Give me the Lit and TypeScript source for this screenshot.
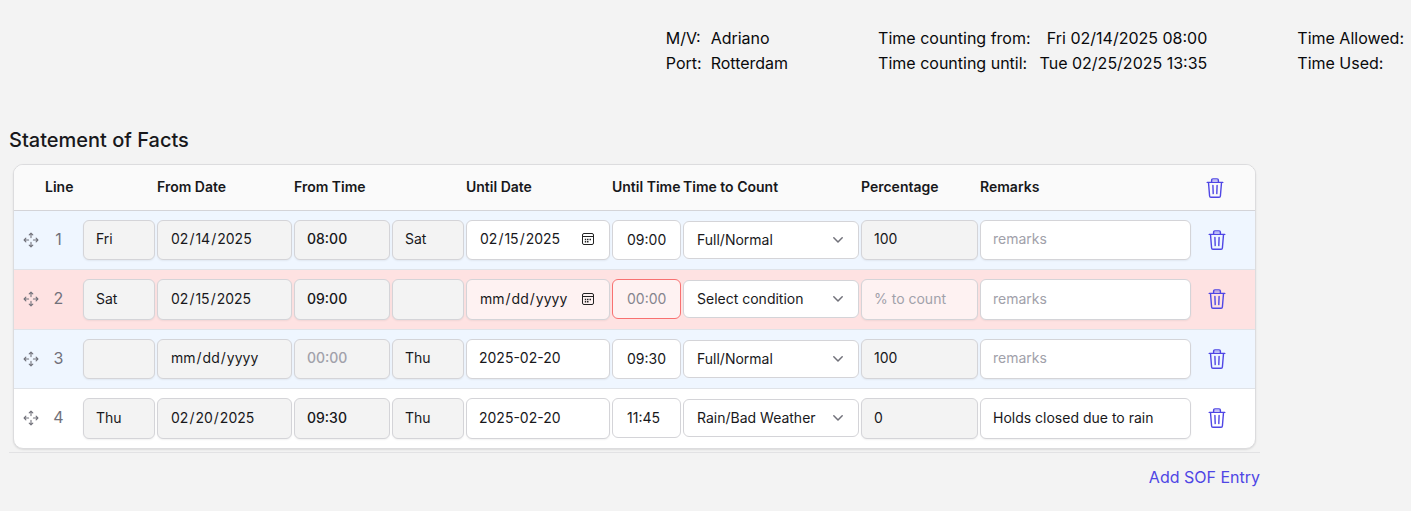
import { LitElement, html, css, svg } from "lit";
import { customElement, state } from "lit/decorators.js";
import { classMap } from "lit/directives/class-map.js";

interface SofEntry {
  fromDay: string;
  fromDate: string;
  fromTime: string;
  untilDay: string;
  untilDate: string;
  untilDateIsText?: boolean;
  untilTime: string;
  condition: string;
  percentage: string;
  remarks: string;
  tone: "info" | "invalid" | "plain";
}

const CONDITIONS = ["Select condition", "Full/Normal", "Rain/Bad Weather"];

const trashIcon = html`<svg class="trash" viewBox="0 0 18 20" width="18" height="20" aria-hidden="true">
  ${svg`<g fill="none" stroke="currentColor" stroke-width="1.4" stroke-linecap="round" stroke-linejoin="round">
    <path d="M1.2 4.4H16.8" />
    <path d="M5.6 4.2V2.2Q5.6 .9 6.9 .9H11.1Q12.4 .9 12.4 2.2V4.2" />
    <path d="M5.6 2.7H12.4" stroke-width=".7" opacity=".6" />
    <path d="M2.5 4.6L3.6 18Q3.7 19.2 4.9 19.2H13.1Q14.3 19.2 14.4 18L15.5 4.6" />
    <path d="M6.9 7.4L7.2 15.6M11.1 7.4L10.8 15.6" />
  </g>`}
</svg>`;

const moveIcon = html`<svg class="move" viewBox="0 0 16 16" width="16" height="16" aria-hidden="true">
  ${svg`<g fill="none" stroke="currentColor" stroke-width="1.1" stroke-linecap="round" stroke-linejoin="round">
    <path d="M8 5.6V1.2M6.2 2.9L8 1.1L9.8 2.9" />
    <path d="M8 10.4V14.8M6.2 13.1L8 14.9L9.8 13.1" />
    <path d="M5.6 8H1.2M2.9 6.2L1.1 8L2.9 9.8" />
    <path d="M10.4 8H14.8M13.1 6.2L14.9 8L13.1 9.8" />
  </g>`}
</svg>`;

@customElement("app-root")
export class AppRoot extends LitElement {
  static styles = css`
    :host {
      display: block;
      box-sizing: border-box;
      min-height: 100vh;
      background: #f3f3f3;
      color: #18181b;
      font-family: Inter, "Liberation Sans", sans-serif;
      font-size: 14px;
      line-height: 20px;
    }
    *, *::before, *::after { box-sizing: border-box; }

    .summary {
      display: flex;
      justify-content: flex-end;
      gap: 90px;
      padding: 26px 7px 0;
      font-size: 16px;
      line-height: 25px;
      color: #09090b;
      white-space: nowrap;
    }
    .pairs {
      display: grid;
      grid-template-columns: auto auto;
      column-gap: 9px;
      align-content: start;
      margin: 0;
    }
    .pairs dd { margin: 0; }
    .period dd { text-align: right; }
    .totals { display: block; }

    .statement {
      padding: 50px 151px 0 9px;
    }
    h1 {
      margin: 0;
      font-size: 20px;
      line-height: 28px;
      font-weight: 500;
    }
    .sheet {
      padding: 10px 4px 3px;
      border-bottom: 1px solid #e2e2e4;
    }
    .card {
      overflow: hidden;
      border: 1px solid #dcdcde;
      border-radius: 10px;
      background: #fff;
      box-shadow: 0 1px 2px rgba(0, 0, 0, 0.1);
    }
    table {
      width: 100%;
      table-layout: fixed;
      border-collapse: separate;
      border-spacing: 0;
    }
    .c-move { width: 30px; }
    .c-line { width: 38px; }
    .c-day { width: 74px; }
    .c-date { width: 137px; }
    .c-time { width: 98px; }
    .c-until { width: 146px; }
    .c-clock { width: 71px; }
    .c-count { width: 178px; }
    .c-pct { width: 119px; }
    .c-action { width: 63px; }

    th {
      height: 46px;
      padding: 0 1px 2px;
      border-bottom: 1px solid #d4d4d8;
      background: #fafafa;
      text-align: left;
      font-weight: 600;
      white-space: nowrap;
    }
    td {
      padding: 9px 1px;
      border-bottom: 1px solid #e0e3e8;
      vertical-align: top;
    }
    tbody tr:last-child td { border-bottom: 0; }
    .info td { background: #eff6ff; }
    .invalid td { background: #fee2e2; }

    th.line, td.line { text-align: center; padding-right: 9px; }
    td.line {
      color: #71717a;
      font-size: 16px;
      line-height: 38px;
      padding-left: 0;
    }
    td.handle { padding-left: 9px; color: #71717a; }
    .cell { display: flex; align-items: center; height: 40px; }
    td.action { padding-left: 16px; }
    th.action { padding-left: 14px; }

    button {
      display: flex;
      padding: 0;
      border: 0;
      background: none;
      color: #4f46e5;
      font: inherit;
      cursor: pointer;
    }
    .drag { color: inherit; cursor: move; }
    th .trash { margin-top: 2px; }

    .field {
      display: block;
      width: 100%;
      height: 40px;
      margin: 0;
      padding: 0 12px 3px;
      border: 1px solid #d4d4d8;
      border-radius: 6px;
      outline: none;
      background: #fff;
      box-shadow: 0 1px 2px rgba(0, 0, 0, 0.06);
      color: #18181b;
      font: 400 14px/20px Inter, "Liberation Sans", sans-serif;
    }
    tr:nth-child(even) .tall { height: 41px; }
    .field::placeholder { color: #a1a1aa; opacity: 1; }
    .locked { background: #f3f3f3; }
    .strong { font-weight: 500; }
    .missing { background: #fef2f2; }
    .date { padding-bottom: 2px; }
    .clock { padding: 0 14px 1px; box-shadow: none; }
    .clock.missing { border-color: #f87171; }
    .clock::placeholder { color: #85858e; }
    .date::-webkit-calendar-picker-indicator {
      width: 14px;
      height: 14px;
      margin: 0 2px 0 0;
      padding: 0;
      background: url("data:image/svg+xml,%3Csvg xmlns='http://www.w3.org/2000/svg' viewBox='0 0 14 14' fill='none' stroke='%23222'%3E%3Crect x='1.5' y='1.5' width='11' height='11' rx='1.5'/%3E%3Cpath d='M1.5 4.5h11'/%3E%3Cpath d='M6 7.5h1.5M8.5 7.5H10M3.8 7.5h1.4M3.8 9.8h1.4M6 9.8h1.5' stroke-width='1.4'/%3E%3C/svg%3E") center / 14px 14px no-repeat;
    }
    .date.locked::-webkit-calendar-picker-indicator { display: none; }

    .select {
      display: grid;
      grid-template-columns: 1fr;
      align-items: center;
      margin-top: 1px;
    }
    .select > * { grid-area: 1 / 1; }
    .select select {
      height: 38px;
      padding: 0 34px 0 13px;
      appearance: none;
      box-shadow: none;
    }
    .chevron {
      justify-self: end;
      margin-right: 15px;
      color: #71717a;
      pointer-events: none;
    }

    .footer {
      display: flex;
      justify-content: flex-end;
      padding-top: 12px;
    }
    .add { font-size: 16px; line-height: 25px; }
  `;

  @state() private entries: SofEntry[] = [
    { fromDay: "Fri", fromDate: "2025-02-14", fromTime: "08:00", untilDay: "Sat", untilDate: "2025-02-15", untilTime: "09:00", condition: "Full/Normal", percentage: "100", remarks: "", tone: "info" },
    { fromDay: "Sat", fromDate: "2025-02-15", fromTime: "09:00", untilDay: "", untilDate: "", untilTime: "", condition: "Select condition", percentage: "", remarks: "", tone: "invalid" },
    { fromDay: "", fromDate: "", fromTime: "", untilDay: "Thu", untilDate: "2025-02-20", untilDateIsText: true, untilTime: "09:30", condition: "Full/Normal", percentage: "100", remarks: "", tone: "info" },
    { fromDay: "Thu", fromDate: "2025-02-20", fromTime: "09:30", untilDay: "Thu", untilDate: "2025-02-20", untilDateIsText: true, untilTime: "11:45", condition: "Rain/Bad Weather", percentage: "0", remarks: "Holds closed due to rain", tone: "plain" },
  ];

  private removeEntry(index: number) {
    this.entries = this.entries.filter((_, i) => i !== index);
  }

  private addEntry() {
    this.entries = [
      ...this.entries,
      { fromDay: "", fromDate: "", fromTime: "", untilDay: "", untilDate: "", untilTime: "", condition: CONDITIONS[0], percentage: "", remarks: "", tone: "plain" },
    ];
  }

  private renderEntry(entry: SofEntry, index: number) {
    const n = index + 1;
    const invalid = entry.tone === "invalid";
    return html`
      <tr class=${entry.tone}>
        <td class="handle"><div class="cell"><button class="drag" aria-label="Move line ${n}">${moveIcon}</button></div></td>
        <td class="line">${n}</td>
        <td><input class="field tall locked" readonly aria-label="From day, line ${n}" .value=${entry.fromDay} /></td>
        <td><input class="field tall locked date" type="date" readonly aria-label="From date, line ${n}" .value=${entry.fromDate} /></td>
        <td><input class="field tall locked strong" readonly placeholder="00:00" aria-label="From time, line ${n}" .value=${entry.fromTime} /></td>
        <td><input class="field tall locked" readonly aria-label="Until day, line ${n}" .value=${entry.untilDay} /></td>
        <td>
          <input
            class=${classMap({ field: true, tall: true, date: !entry.untilDateIsText, missing: invalid })}
            type=${entry.untilDateIsText ? "text" : "date"}
            aria-label="Until date, line ${n}"
            .value=${entry.untilDate}
          />
        </td>
        <td>
          <input
            class=${classMap({ field: true, clock: true, missing: invalid })}
            placeholder="00:00"
            aria-label="Until time, line ${n}"
            .value=${entry.untilTime}
          />
        </td>
        <td>
          <div class="select">
            <select class="field" aria-label="Time to count, line ${n}">
              ${CONDITIONS.map((c) => html`<option ?selected=${c === entry.condition}>${c}</option>`)}
            </select>
            <svg class="chevron" viewBox="0 0 12 8" width="12" height="8" aria-hidden="true">
              <path d="M1.8 1.8L6 6L10.2 1.8" fill="none" stroke="currentColor" stroke-width="1.5" stroke-linecap="round" stroke-linejoin="round" />
            </svg>
          </div>
        </td>
        <td>
          <input
            class=${classMap({ field: true, tall: true, locked: !invalid, missing: invalid })}
            placeholder="% to count"
            aria-label="Percentage, line ${n}"
            .value=${entry.percentage}
          />
        </td>
        <td><input class="field tall" placeholder="remarks" aria-label="Remarks, line ${n}" .value=${entry.remarks} /></td>
        <td class="action">
          <div class="cell"><button aria-label="Delete line ${n}" @click=${() => this.removeEntry(index)}>${trashIcon}</button></div>
        </td>
      </tr>
    `;
  }

  render() {
    return html`
      <header class="summary">
        <dl class="pairs">
          <dt>M/V:</dt><dd>Adriano</dd>
          <dt>Port:</dt><dd>Rotterdam</dd>
        </dl>
        <dl class="pairs period">
          <dt>Time counting from:</dt><dd>Fri 02/14/2025 08:00</dd>
          <dt>Time counting until:</dt><dd>Tue 02/25/2025 13:35</dd>
        </dl>
        <dl class="pairs totals">
          <dt>Time Allowed:</dt>
          <dt>Time Used:</dt>
        </dl>
      </header>
      <main class="statement">
        <h1>Statement of Facts</h1>
        <div class="sheet">
          <div class="card">
            <table>
              <colgroup>
                <col class="c-move" /><col class="c-line" /><col class="c-day" /><col class="c-date" />
                <col class="c-time" /><col class="c-day" /><col class="c-until" /><col class="c-clock" />
                <col class="c-count" /><col class="c-pct" /><col /><col class="c-action" />
              </colgroup>
              <thead>
                <tr>
                  <th></th>
                  <th class="line">Line</th>
                  <th></th>
                  <th>From Date</th>
                  <th>From Time</th>
                  <th></th>
                  <th>Until Date</th>
                  <th>Until Time</th>
                  <th>Time to Count</th>
                  <th>Percentage</th>
                  <th>Remarks</th>
                  <th class="action">
                    <button aria-label="Delete all lines" @click=${() => (this.entries = [])}>${trashIcon}</button>
                  </th>
                </tr>
              </thead>
              <tbody>
                ${this.entries.map((entry, i) => this.renderEntry(entry, i))}
              </tbody>
            </table>
          </div>
        </div>
        <div class="footer">
          <button class="add" @click=${this.addEntry}>Add SOF Entry</button>
        </div>
      </main>
    `;
  }
}
